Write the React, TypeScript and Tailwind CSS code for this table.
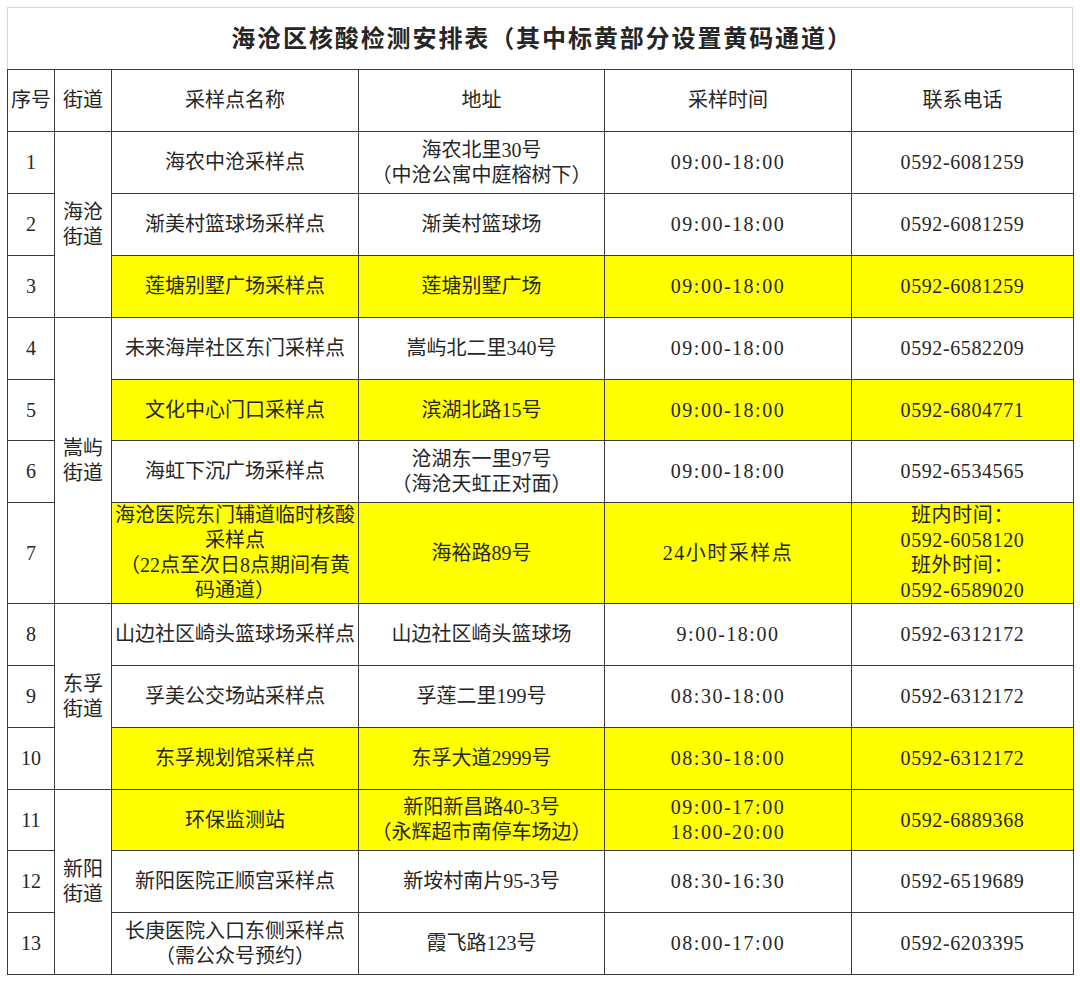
import React from 'react';

type Row = {
  no: string;
  name: React.ReactNode;
  addr: React.ReactNode;
  time: React.ReactNode;
  phone: React.ReactNode;
  yellow?: boolean;
  h?: string;
};

type Group = { street: string[]; rows: Row[] };

const groups: Group[] = [
  {
    street: ['海沧', '街道'],
    rows: [
      { no: '1', name: '海农中沧采样点', addr: <>海农北里30号<br />（中沧公寓中庭榕树下）</>, time: '09:00-18:00', phone: '0592-6081259' },
      { no: '2', name: '渐美村篮球场采样点', addr: '渐美村篮球场', time: '09:00-18:00', phone: '0592-6081259' },
      { no: '3', name: '莲塘别墅广场采样点', addr: '莲塘别墅广场', time: '09:00-18:00', phone: '0592-6081259', yellow: true },
    ],
  },
  {
    street: ['嵩屿', '街道'],
    rows: [
      { no: '4', name: '未来海岸社区东门采样点', addr: '嵩屿北二里340号', time: '09:00-18:00', phone: '0592-6582209' },
      { no: '5', name: '文化中心门口采样点', addr: '滨湖北路15号', time: '09:00-18:00', phone: '0592-6804771', yellow: true, h: 'h-[61px]' },
      { no: '6', name: '海虹下沉广场采样点', addr: <>沧湖东一里97号<br />（海沧天虹正对面）</>, time: '09:00-18:00', phone: '0592-6534565' },
      {
        no: '7',
        name: <>海沧医院东门辅道临时核酸<br />采样点<br />（22点至次日8点期间有黄<br />码通道）</>,
        addr: '海裕路89号',
        time: '24小时采样点',
        phone: <>班内时间：<br />0592-6058120<br />班外时间：<br />0592-6589020</>,
        yellow: true,
        h: 'h-[99px]',
      },
    ],
  },
  {
    street: ['东孚', '街道'],
    rows: [
      { no: '8', name: '山边社区崎头篮球场采样点', addr: '山边社区崎头篮球场', time: '9:00-18:00', phone: '0592-6312172' },
      { no: '9', name: '孚美公交场站采样点', addr: '孚莲二里199号', time: '08:30-18:00', phone: '0592-6312172' },
      { no: '10', name: '东孚规划馆采样点', addr: '东孚大道2999号', time: '08:30-18:00', phone: '0592-6312172', yellow: true },
    ],
  },
  {
    street: ['新阳', '街道'],
    rows: [
      { no: '11', name: '环保监测站', addr: <>新阳新昌路40-3号<br />（永辉超市南停车场边）</>, time: <>09:00-17:00<br />18:00-20:00</>, phone: '0592-6889368', yellow: true, h: 'h-[61px]' },
      { no: '12', name: '新阳医院正顺宫采样点', addr: '新垵村南片95-3号', time: '08:30-16:30', phone: '0592-6519689' },
      { no: '13', name: <>长庚医院入口东侧采样点<br />（需公众号预约）</>, addr: '霞飞路123号', time: '08:00-17:00', phone: '0592-6203395' },
    ],
  },
];

const cell = 'border border-[#3a3a3a] p-0 text-center align-middle whitespace-nowrap';

export default function App() {
  return (
    <div
      className="w-[1080px] h-[981px] bg-white pl-[7px] pt-[7px] text-[#262626] text-[20px] leading-[25px]"
      style={{ fontFamily: '"Liberation Serif", "Noto Sans CJK SC", serif' }}
    >
      <div className="w-[1066px]">
        <div className="h-[62px] border border-b-0 border-[#d6d6d6] flex items-center justify-center">
          <span className="text-[24px] font-bold tracking-[1.9px] pt-[2px] pl-[4px]">海沧区核酸检测安排表（其中标黄部分设置黄码通道）</span>
        </div>
        <table className="w-full table-fixed border-collapse">
          <colgroup>
            <col className="w-[47px]" />
            <col className="w-[57px]" />
            <col className="w-[247px]" />
            <col className="w-[246px]" />
            <col className="w-[247px]" />
            <col className="w-[222px]" />
          </colgroup>
          <thead>
            <tr className="h-[62px]">
              <th className={`${cell} font-normal`}>序号</th>
              <th className={`${cell} font-normal`}>街道</th>
              <th className={`${cell} font-normal`}>采样点名称</th>
              <th className={`${cell} font-normal`}>地址</th>
              <th className={`${cell} font-normal`}>采样时间</th>
              <th className={`${cell} font-normal`}>联系电话</th>
            </tr>
          </thead>
          <tbody>
            {groups.map((g) =>
              g.rows.map((r, i) => {
                const bg = r.yellow ? 'bg-[#ffff00]' : '';
                return (
                  <tr key={r.no} className={r.h ?? 'h-[62px]'}>
                    <td className={cell}>{r.no}</td>
                    {i === 0 && (
                      <td rowSpan={g.rows.length} className={cell}>
                        {g.street[0]}
                        <br />
                        {g.street[1]}
                      </td>
                    )}
                    <td className={`${cell} ${bg}`}>{r.name}</td>
                    <td className={`${cell} ${bg}`}>{r.addr}</td>
                    <td className={`${cell} ${bg} tracking-[1.5px]`}>{r.time}</td>
                    <td className={`${cell} ${bg} tracking-[0.6px]`}>{r.phone}</td>
                  </tr>
                );
              })
            )}
          </tbody>
        </table>
      </div>
    </div>
  );
}
